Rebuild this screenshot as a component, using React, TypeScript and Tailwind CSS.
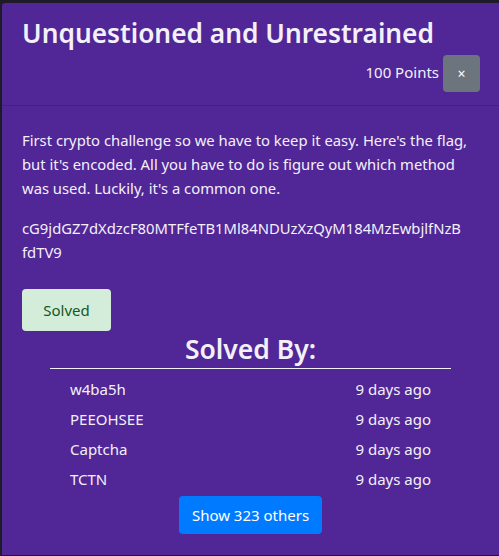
export default function App() {
  const rows = [
    ["w4ba5h", "9 days ago"],
    ["PEEOHSEE", "9 days ago"],
    ["Captcha", "9 days ago"],
    ["TCTN", "9 days ago"],
  ];
  return (
    <div
      className="w-[499px] h-[556px] overflow-hidden bg-[#1f1a27] pt-[3px] pl-[2px]"
      style={{ fontFamily: '"Noto Sans", "Open Sans", sans-serif' }}
    >
      <div className="w-[497px] h-[552px] bg-[#512696] text-[#f3f0fa] rounded-tl-[3px]">
        <div className="px-[20px] pt-[12px] pb-[13px] border-b border-[#42207c]">
          <h3 className="text-[26.3px] leading-[36px] font-semibold">
            Unquestioned and Unrestrained
          </h3>
          <div className="flex justify-end items-center mt-[4px]">
            <span className="text-[15px] mr-[4px] -mt-[2px]">100 Points</span>
            <button className="w-[37px] h-[37px] bg-[#6c757d] rounded-[4px] text-white text-[14px] flex items-center justify-center mr-[-1px]">
              ×
            </button>
          </div>
        </div>
        <div className="px-[20px] pt-[22px]">
          <p className="text-[14.8px] leading-[24px]">
            First crypto challenge so we have to keep it easy. Here's the flag, but it's encoded. All you have to do is figure out which method was used. Luckily, it's a common one.
          </p>
          <p className="text-[14.8px] leading-[24px] mt-[16px] break-all w-[439px]">
            cG9jdGZ7dXdzcF80MTFfeTB1Ml84NDUzXzQyM184MzEwbjlfNzBfdTV9
          </p>
          <button className="mt-[25px] w-[89px] h-[42px] bg-[#d4edda] text-[#155724] rounded-[4px] text-[15px]">
            Solved
          </button>
          <div className="mx-[28px] flex flex-col items-center">
            <h3 className="text-[26.5px] leading-[37px] font-semibold">Solved By:</h3>
            <div className="w-full h-px bg-[#f3f0fa]" />
            <div className="w-full px-[20px] pt-[5px]">
              {rows.map(([n, d]) => (
                <div key={n} className="flex justify-between h-[30px] items-center text-[15px]">
                  <span>{n}</span>
                  <span>{d}</span>
                </div>
              ))}
            </div>
            <button className="mt-[2px] w-[143px] h-[38px] bg-[#007bff] text-white rounded-[4px] text-[15px]">
              Show 323 others
            </button>
          </div>
        </div>
      </div>
    </div>
  );
}
